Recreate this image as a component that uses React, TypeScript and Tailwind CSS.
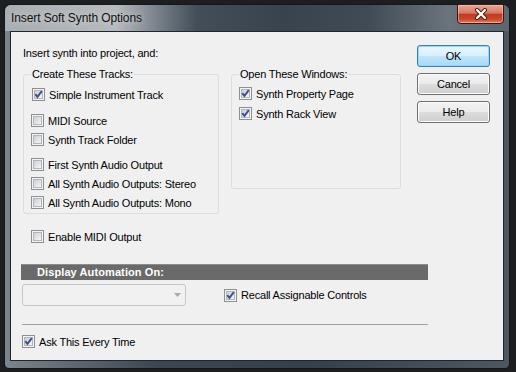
import { useId } from "react";

const label = "font-['Liberation_Sans',Arial,sans-serif] text-[11px] leading-[14px] tracking-[-0.2px] text-black";

function CheckBox({ checked }: { checked?: boolean }) {
  const raw = useId();
  const id = "g" + raw.replace(/[^a-zA-Z0-9]/g, "");
  return (
    <svg width="13" height="13" viewBox="0 0 13 13" className="shrink-0">
      <defs>
        <linearGradient id={id} x1="0" y1="0" x2="1" y2="1">
          <stop offset="0" stopColor="#c9cdd3" />
          <stop offset="1" stopColor="#f7f7f7" />
        </linearGradient>
      </defs>
      <rect x="0.5" y="0.5" width="12" height="12" fill="#f4f4f4" stroke="#8e8f8f" />
      <rect x="2.5" y="2.5" width="8" height="8" fill={`url(#${id})`} stroke="#b2b6bb" />
      {checked && (
        <path d="M3.3 6.2 L5.4 8.9 L9.8 3.2" fill="none" stroke="#3d4f8e" strokeWidth="1.9" />
      )}
    </svg>
  );
}

function Row({ checked, text, className = "" }: { checked?: boolean; text: string; className?: string }) {
  return (
    <div className={`flex items-center h-[19px] gap-[4px] ${className}`}>
      <CheckBox checked={checked} />
      <span className={label}>{text}</span>
    </div>
  );
}

function Button({ text, primary }: { text: string; primary?: boolean }) {
  return (
    <div
      className={`w-[73px] h-[22px] rounded-[3px] border flex items-center justify-center ${label} ${
        primary
          ? "border-[#3c7fb1] bg-[linear-gradient(#e8f6fd_0%,#d9f0fc_50%,#bee6fd_51%,#a7d9f5_100%)] shadow-[inset_0_0_0_1px_#94d8ff]"
          : "border-[#707070] bg-[linear-gradient(#f2f2f2_0%,#ebebeb_50%,#dddddd_51%,#cfcfcf_100%)] shadow-[inset_0_0_0_1px_#fcfcfc]"
      }`}
    >
      {text}
    </div>
  );
}

export default function App() {
  return (
    <div className="w-[516px] h-[372px] bg-[#1c1e20] overflow-hidden pt-[4px] pl-[4px]">
      {/* window frame */}
      <div className="w-[506px] h-[365px] rounded-t-[7px] rounded-b-[5px] border border-[#11171c] bg-[linear-gradient(90deg,#7d858c_0%,#3c4650_30%,#34404a_60%,#4d5760_100%)] px-[5px] pb-[6px]">
        {/* title bar */}
        <div className="h-[26px] flex items-start bg-[linear-gradient(90deg,#a9aeb3_0%,#b6babd_22%,#7a838b_30%,#444e58_38%,#39434d_55%,#414b55_72%,#6b747c_88%,#5c666f_100%)] -mx-[5px] px-[5px] rounded-t-[6px]">
          <div className="pl-[1px] h-[26px] flex items-center font-['Liberation_Sans',Arial,sans-serif] text-[12px] tracking-[-0.1px] text-[#111] [text-shadow:0_0_6px_rgba(230,232,234,0.9)]">
            Insert Soft Synth Options
          </div>
          <div className="ml-auto -mt-[1px] w-[47px] h-[20px] rounded-b-[4px] border border-[#3b1711] bg-[linear-gradient(#e7a696_0%,#d67a64_45%,#c2391f_52%,#c84a2e_80%,#e0865e_100%)] shadow-[inset_0_0_0_1px_rgba(255,220,210,0.45)] flex items-center justify-center">
            <svg width="14" height="12" viewBox="0 0 14 12">
              <path d="M3 2 L11 10 M11 2 L3 10" stroke="#4a1c14" strokeWidth="4" strokeLinecap="round" />
              <path d="M3 2 L11 10 M11 2 L3 10" stroke="#ffffff" strokeWidth="2.2" strokeLinecap="round" />
            </svg>
          </div>
        </div>

        {/* client area */}
        <div className="w-[494px] h-[330px] border border-[#1d2730] bg-[#f0f0f0]">
          <div className="flex items-start pl-[12px]">
            <div className="w-[378px] pt-[14px]">
              <div className={label}>Insert synth into project, and:</div>
              <div className="flex items-start mt-[7px]">
                <fieldset className="w-[196px] border border-[#d5dfe5] rounded-[3px] pl-[7px] pb-[1px]">
                  <legend className={`px-[1px] ${label}`}>Create These Tracks:</legend>
                  <Row checked text="Simple Instrument Track" className="mt-[4px] pl-[1px]" />
                  <Row text="MIDI Source" className="mt-[7px]" />
                  <Row text="Synth Track Folder" />
                  <Row text="First Synth Audio Output" className="mt-[6px]" />
                  <Row text="All Synth Audio Outputs: Stereo" />
                  <Row text="All Synth Audio Outputs: Mono" />
                </fieldset>
                <fieldset className="w-[170px] h-[122px] ml-[12px] border border-[#d5dfe5] rounded-[3px] pl-[7px]">
                  <legend className={`px-[1px] ${label}`}>Open These Windows:</legend>
                  <Row checked text="Synth Property Page" className="mt-[3px]" />
                  <Row checked text="Synth Rack View" className="mt-[1px]" />
                </fieldset>
              </div>
              <Row text="Enable MIDI Output" className="mt-[13px] pl-[8px]" />
            </div>
            <div className="ml-[16px] mt-[13px] flex flex-col gap-[6px]">
              <Button text="OK" primary />
              <Button text="Cancel" />
              <Button text="Help" />
            </div>
          </div>

          <div className="pl-[10px]">
            <div className="mt-[18px] w-[407px] h-[16px] bg-[#6a6a6a] border-t border-[#8c8c8c] pl-[16px] flex items-center font-['Liberation_Sans',Arial,sans-serif] text-[11px] font-bold text-white tracking-[0.1px]">
              Display Automation On:
            </div>
            <div className="mt-[4px] ml-[1px] flex items-center">
              <div className="w-[164px] h-[22px] rounded-[3px] border border-[#c7c7c7] bg-[#f1f1f1] flex items-center justify-end pr-[4px]">
                <svg width="7" height="4" viewBox="0 0 7 4">
                  <path d="M0 0 L7 0 L3.5 4 Z" fill="#a9a9a9" />
                </svg>
              </div>
              <Row checked text="Recall Assignable Controls" className="ml-[38px]" />
            </div>
            <div className="mt-[18px] ml-[1px] w-[406px] h-[1px] bg-[#a0a0a0]" />
            <Row checked text="Ask This Every Time" className="mt-[7px] ml-[1px]" />
          </div>
        </div>
      </div>
    </div>
  );
}
